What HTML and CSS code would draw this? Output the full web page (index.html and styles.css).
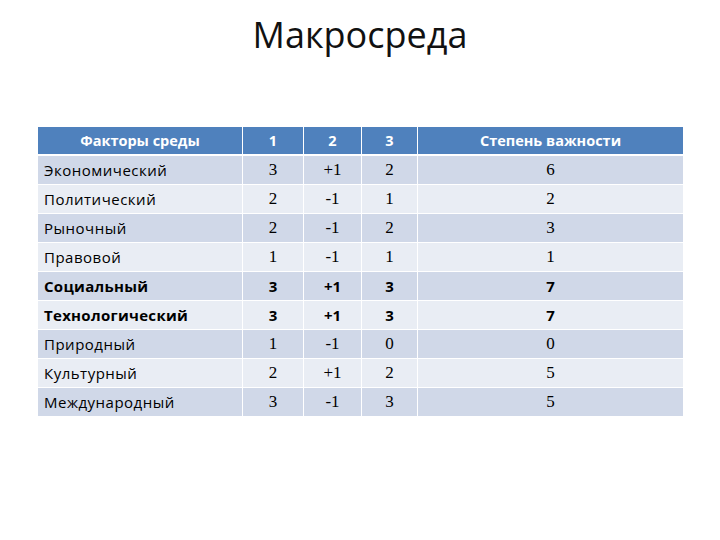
FILE: index.html
```html
<!DOCTYPE html>
<html lang="ru">
<head>
<meta charset="utf-8">
<title>Макросреда</title>
<link rel="stylesheet" href="styles.css">
</head>
<body>
<h1 class="title">Макросреда</h1>
<table class="grid">
  <colgroup>
    <col class="c-name"><col class="c-n1"><col class="c-n2"><col class="c-n3"><col class="c-imp">
  </colgroup>
  <thead>
    <tr><th>Факторы среды</th><th>1</th><th>2</th><th>3</th><th>Степень важности</th></tr>
  </thead>
  <tbody>
    <tr><td class="name">Экономический</td><td>3</td><td>+1</td><td>2</td><td>6</td></tr>
    <tr><td class="name">Политический</td><td>2</td><td>-1</td><td>1</td><td>2</td></tr>
    <tr><td class="name">Рыночный</td><td>2</td><td>-1</td><td>2</td><td>3</td></tr>
    <tr><td class="name">Правовой</td><td>1</td><td>-1</td><td>1</td><td>1</td></tr>
    <tr class="strong"><td class="name">Социальный</td><td>3</td><td>+1</td><td>3</td><td>7</td></tr>
    <tr class="strong"><td class="name">Технологический</td><td>3</td><td>+1</td><td>3</td><td>7</td></tr>
    <tr><td class="name">Природный</td><td>1</td><td>-1</td><td>0</td><td>0</td></tr>
    <tr><td class="name">Культурный</td><td>2</td><td>+1</td><td>2</td><td>5</td></tr>
    <tr><td class="name">Международный</td><td>3</td><td>-1</td><td>3</td><td>5</td></tr>
  </tbody>
</table>
</body>
</html>
```
FILE: styles.css
```css
html, body {
  margin: 0;
  padding: 0;
  background: #ffffff;
}
body {
  width: 720px;
  height: 540px;
  overflow: hidden;
  font-family: "Open Sans", "Liberation Sans", sans-serif;
  color: #000;
}
.title {
  margin: 0;
  padding-top: 9px;
  height: 127px;
  box-sizing: border-box;
  text-align: center;
  font-weight: 400;
  font-size: 36px;
  line-height: 52px;
  color: #111;
}
.grid {
  margin-left: 37px;
  border-collapse: collapse;
  table-layout: fixed;
  width: 646px;
}
.c-name { width: 205px; }
.c-n1 { width: 61px; }
.c-n2 { width: 58px; }
.c-n3 { width: 56px; }
.c-imp { width: 266px; }
.grid th, .grid td {
  padding: 0;
  text-align: center;
  border-left: 1px solid #fff;
  border-right: 1px solid #fff;
}
.grid th {
  background: #4f81bd;
  color: #fff;
  font-weight: 700;
  font-size: 14.5px;
  height: 27px;
  border-bottom: 2px solid #fff;
}
.grid td {
  height: 28px;
  border-bottom: 1px solid #fff;
  font-family: "Liberation Serif", "DejaVu Serif", serif;
  font-size: 17px;
}
.grid tbody tr:nth-child(odd) td { background: #d0d8e8; }
.grid tbody tr:nth-child(even) td { background: #e9edf4; }
.grid td.name {
  text-align: left;
  padding-left: 6px;
  font-family: "Open Sans", "Liberation Sans", sans-serif;
  font-size: 15px;
  letter-spacing: 0.5px;
}
.grid tr.strong td {
  font-family: "Open Sans", "Liberation Sans", sans-serif;
  font-weight: 700;
  font-size: 15px;
}
.grid tr.strong td.name { letter-spacing: 0.3px; }
```
